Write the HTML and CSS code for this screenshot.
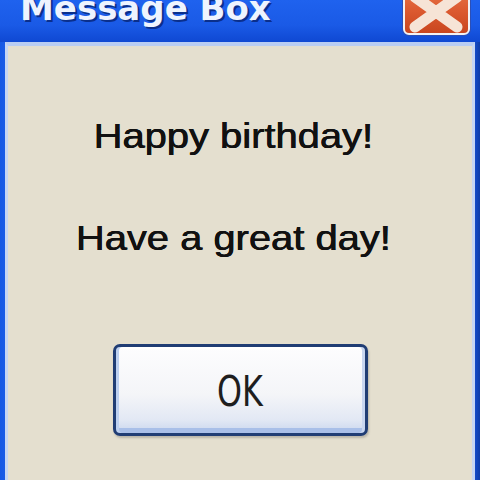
FILE: index.html
```html
<!DOCTYPE html>
<html>
<head>
<meta charset="utf-8">
<link rel="stylesheet" href="styles.css">
</head>
<body>
<div class="window">
  <div class="titlebar">
    <span class="title">Message Box</span>
    <div class="close">
      <svg width="63" height="46" viewBox="0 0 63 46">
        <path d="M10 10 L52 40 M10 40 L52 10" stroke="#f6e4d6" stroke-width="11" stroke-linecap="round" fill="none"/>
      </svg>
    </div>
  </div>
  <div class="content">
    <div class="message">
      <p class="line">Happy birthday!</p>
      <p class="line second">Have a great day!</p>
    </div>
    <div class="button"><span class="ok">OK</span></div>
  </div>
</div>
</body>
</html>
```
FILE: styles.css
```css
html, body {
  margin: 0;
  padding: 0;
  width: 480px;
  height: 480px;
  overflow: hidden;
  background: #e4dfcf;
}
.window {
  height: 480px;
  box-sizing: border-box;
  display: flex;
  flex-direction: column;
  padding: 0 5px 0 5px;
  background: linear-gradient(90deg, #1658e4 0, #1d60ea 2%, #1a5ae4 98%, #0f3ca8 100%);
}
.titlebar {
  height: 42px;
  flex: none;
  display: flex;
  justify-content: space-between;
  align-items: flex-start;
  background: linear-gradient(180deg, #1f62ee 0, #1a5ae6 60%, #0f48d2 100%);
  margin: 0 -5px;
  padding-left: 20px;
  padding-right: 10px;
}
.title {
  font-family: "DejaVu Sans", sans-serif;
  font-weight: bold;
  font-size: 34px;
  line-height: 34px;
  margin-top: -9px;
  color: #eef4ff;
  letter-spacing: 0px;
  text-shadow: 2px 2px 0 #0a2f8c, 1px 1px 0 #6d93e6;
}
.close {
  width: 67px;
  height: 50px;
  margin-top: -15px;
  box-sizing: border-box;
  border: 2px solid #f2f2f4;
  border-radius: 6px;
  background: linear-gradient(180deg, #e8774a 0, #dc5a30 50%, #c9461f 100%);
  box-shadow: 0 0 0 1px #2c4fb6;
  overflow: hidden;
}
.close svg { display: block; }
.content {
  flex: 1;
  background: #e4dfcf;
  border-top: 4px solid #b9cdf3;
  border-left: 3px solid #c6d6f4;
  border-right: 3px solid #c6d6f4;
  display: flex;
  flex-direction: column;
  align-items: center;
  padding-top: 70px;
}
.message {
  margin-right: 14px;
  transform: scaleX(1.14);
  display: flex;
  flex-direction: column;
  align-items: center;
}
.line {
  margin: 0;
  font-family: "Liberation Sans", Arial, sans-serif;
  font-size: 35px;
  line-height: 40px;
  color: #111111;
  white-space: nowrap;
  text-shadow: 0.6px 0 0 #111111, 0 0.4px 0 #111111;
}
.second { margin-top: 62px; }
.button {
  margin-top: 86px;
  width: 255px;
  height: 92px;
  box-sizing: border-box;
  border: 3px solid #203d74;
  border-radius: 7px;
  background: linear-gradient(180deg, #fdfdfe 0, #f4f5f8 55%, #e2e8f4 85%, #c9d6ee 100%);
  box-shadow: inset 3px 0 0 #bcd0f0, inset -3px 0 0 #c8d6f0, inset 0 -5px 0 #a9bfe8, inset 0 2px 0 #ffffff, 1px 2px 2px rgba(60,60,60,0.25);
  display: flex;
  align-items: center;
  justify-content: center;
}
.ok {
  font-family: "DejaVu Sans Condensed", "DejaVu Sans", sans-serif;
  font-size: 43px;
  line-height: 43px;
  color: #1e1e1e;
  transform: scaleX(0.82);
  margin-top: 2px;
}
```
